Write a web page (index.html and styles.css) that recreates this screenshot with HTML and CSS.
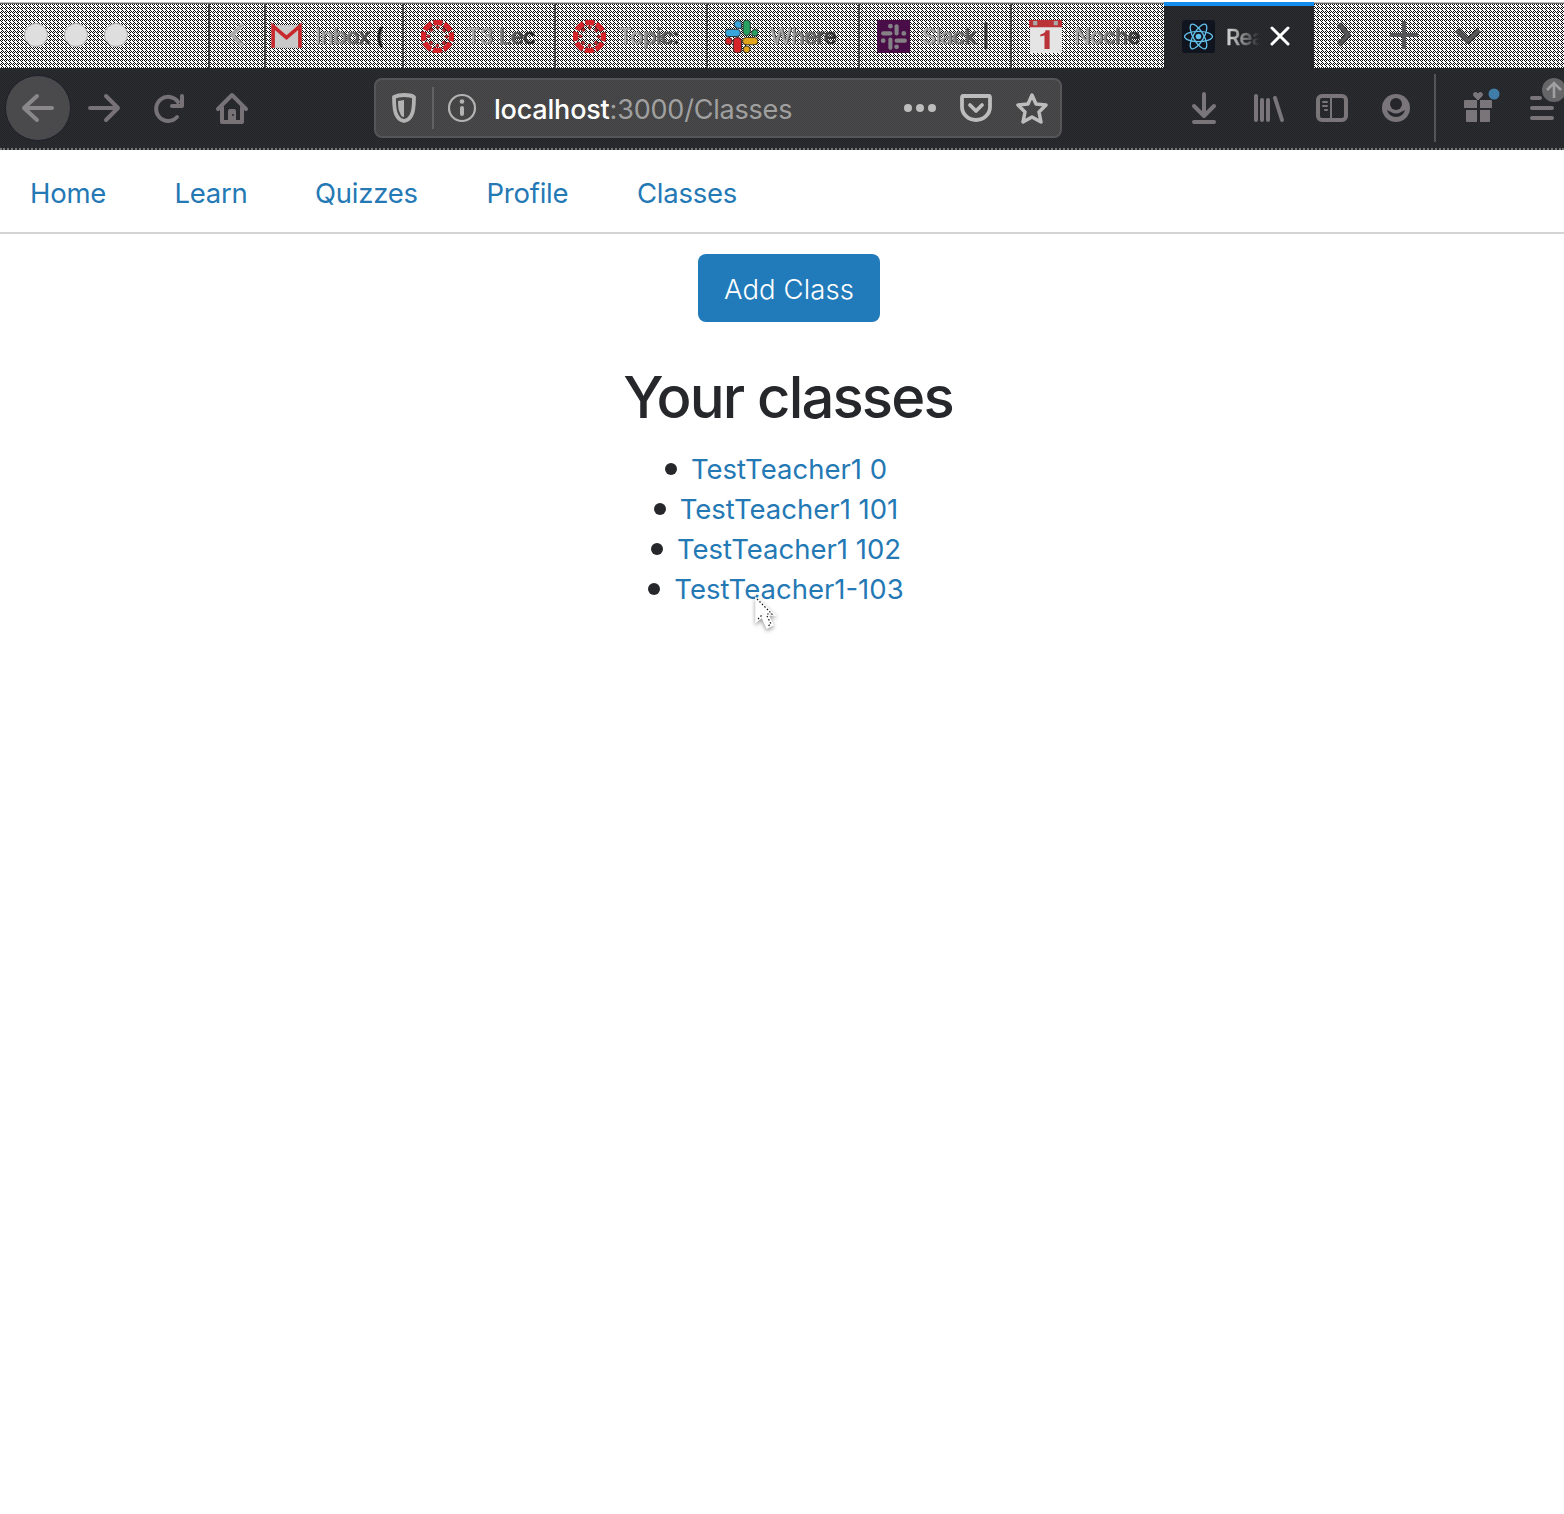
FILE: index.html
```html
<!DOCTYPE html>
<html lang="en">
<head>
<meta charset="utf-8">
<title>React App</title>
<link rel="stylesheet" href="styles.css">
</head>
<body>
<div class="tabstrip">
  <div class="window-controls"><i></i><i></i><i></i></div>
  <div class="tab-scroll"><svg width="54" height="64" viewBox="0 0 54 64"><path d="M33 20 22 31l11 11" fill="none" stroke="#aaa" stroke-width="4"/></svg></div>
  <div class="tab tab-first">
    <svg class="fav" viewBox="0 0 32 32"><path d="M2 5h28v22H2z" fill="#c9c9c9"/><path d="M3 27V6l13 11L29 6v21" fill="none" stroke="#c9282d" stroke-width="3.500"/></svg>
    <span class="label">Inbox (</span>
  </div>
  <div class="tab">
    <svg class="fav canvas" viewBox="0 0 32 32"><circle cx="16" cy="16" r="13.6" fill="none" stroke="#d6232a" stroke-width="5" stroke-dasharray="8.7 1.98" stroke-dashoffset="4.35"/><circle cx="16" cy="16" r="8.7" fill="none" stroke="#b52a2c" stroke-width="3" stroke-dasharray="3 3.83" stroke-dashoffset="1.5"/></svg>
    <span class="label">T3 Lec</span>
  </div>
  <div class="tab">
    <svg class="fav canvas" viewBox="0 0 32 32"><circle cx="16" cy="16" r="13.6" fill="none" stroke="#d6232a" stroke-width="5" stroke-dasharray="8.7 1.98" stroke-dashoffset="4.35"/><circle cx="16" cy="16" r="8.7" fill="none" stroke="#b52a2c" stroke-width="3" stroke-dasharray="3 3.83" stroke-dashoffset="1.5"/></svg>
    <span class="label">Topic:</span>
  </div>
  <div class="tab">
    <svg class="fav" viewBox="0 0 32 32"><g stroke="#222" stroke-width=".8"><rect x="0" y="9" width="15" height="7" rx="3.5" fill="#38a6dc"/><path d="M9 4a3.5 3.5 0 0 1 7 0v4h-3a4 4 0 0 1-4-4z" fill="#38a6dc"/><rect x="17.500" y="0" width="7" height="15" rx="3.500" fill="#27a062"/><circle cx="29" cy="12.500" r="3.200" fill="#27a062"/><rect x="17" y="17" width="15" height="7" rx="3.500" fill="#e0a51b"/><circle cx="21" cy="28.500" r="3.300" fill="#e0a51b"/><rect x="8" y="17" width="8" height="15" rx="3.500" fill="#d6232a"/><circle cx="3.500" cy="20.500" r="3.500" fill="#d6232a"/></g></svg>
    <span class="label">Where</span>
  </div>
  <div class="tab">
    <svg class="fav" viewBox="0 0 32 32"><path d="M0 0h32v32H0z" fill="#490d48"/><g fill="#858085"><rect x="4" y="11" width="11" height="4" rx="2"/><rect x="17" y="4" width="4" height="11" rx="2"/><rect x="17" y="18" width="12" height="4" rx="2"/><rect x="11" y="17" width="4" height="12" rx="2"/><circle cx="13" cy="6" r="2.300"/><circle cx="26" cy="13" r="2.300"/><circle cx="6" cy="20" r="2.300"/><circle cx="19" cy="26" r="2.300"/></g></svg>
    <span class="label">Slack |</span>
  </div>
  <div class="tab">
    <svg class="fav" viewBox="0 0 32 32"><path d="M1 3h31v29H1z" fill="#e5e5e5"/><path d="M0 0h32v7H0z" fill="#b93337"/><path d="M4 1h4v4H4zM24 1h4v4h-4z" fill="#aaa"/><path d="M11 14q5-1 5-4h4v18h-5V15l-4 1z" fill="#b93337"/></svg>
    <span class="label">Noche</span>
  </div>
  <div class="tab tab-active">
    <svg class="fav" viewBox="0 0 32 32"><rect width="32" height="32" rx="3" fill="#10141f"/><g fill="none" stroke="#61bfe8" stroke-width="1.300"><ellipse cx="16" cy="16" rx="13.500" ry="5"/><ellipse cx="16" cy="16" rx="13.500" ry="5" transform="rotate(60 16 16)"/><ellipse cx="16" cy="16" rx="13.500" ry="5" transform="rotate(120 16 16)"/></g><circle cx="16" cy="16" r="2.700" fill="#61bfe8"/></svg>
    <span class="label">Rea</span>
    <svg class="close" viewBox="0 0 20 20"><path d="m2 2 16 16M18 2 2 18" stroke="#fff" stroke-width="3" stroke-linecap="round"/></svg>
  </div>
  <svg class="tab-tools" width="248" height="64" viewBox="0 0 248 64"><g fill="none" stroke="#222" stroke-width="5.500" stroke-linejoin="round"><path d="m25 20 9 11-9 10"/><path d="m143 26 11 11 11-11"/></g><g fill="none" stroke="#555557" stroke-width="4"><path d="m25 20 9 11-9 10M90 17v28M76 31h28M143 26l11 11 11-11"/></g></svg>
</div>

<div class="toolbar">
  <svg class="nav-buttons" width="260" height="80" viewBox="0 0 260 80"><circle cx="38" cy="40" r="32.500" fill="#4a4a4c" stroke="#20202c"/><g fill="none" stroke="#767276" stroke-width="4" stroke-linecap="round" stroke-linejoin="round"><path d="M52 40H24M37 28 24 40l13 12" stroke="#8b888b"/><path d="M90 40h28M106 28l12 12-12 12"/><path d="M178 34a12 12 0 1 0-1 15M182 28v10h-10"/><path d="m218 41 14-14 14 14M222 39v15h20V39"/></g><path d="M228 54V43q0-2 2-2h4q2 0 2 2v11z" fill="#767276"/><circle cx="233" cy="47" r="1" fill="#26272c"/></svg>
  <div class="address">
    <svg class="address-left" width="118" height="56" viewBox="0 0 118 56"><g fill="none" stroke="#b3b3b3"><path d="M28 15q7 0 10 2 0 15-3 19-2 4-7 5-5-1-7-5-3-4-3-19 4-2 10-2z" stroke-width="3.800" stroke-linejoin="round"/><circle cx="86" cy="28" r="13" stroke-width="2.200"/></g><path d="M28 20v17q-3 0-4-4-2-3-2-12z" fill="#b3b3b3"/><path d="M57 7v42" stroke="#626264" stroke-width="2"/><path d="M86 28v6" stroke="#b3b3b3" stroke-width="4" stroke-linecap="round"/><circle cx="86" cy="21.500" r="2.300" fill="#b3b3b3"/></svg>
    <span class="url"><b>localhost</b>:3000/Classes</span>
    <svg class="address-right" width="160" height="56" viewBox="0 0 160 56"><g fill="#bdbdbd"><circle cx="8" cy="28" r="4"/><circle cx="20" cy="28" r="4"/><circle cx="32" cy="28" r="4"/></g><g fill="none" stroke="#bdbdbd" stroke-width="3.800" stroke-linejoin="round" stroke-linecap="round"><path d="M63 16h26q1 0 1 2v9a14 13 0 0 1-28 0v-9q0-2 1-2zM70 25l6 6 6-6"/><path d="m132 15 4 9 10 1-7 7 2 10-9-5-9 5 2-10-7-7 10-1z" stroke-width="3.500"/></g></svg>
  </div>
  <svg class="tools" width="384" height="80" viewBox="0 0 384 80"><g fill="none" stroke="#797579" stroke-width="4" stroke-linecap="round" stroke-linejoin="round"><path d="M24 26v22M14 38l10 10 10-10M14 54h20"/><path d="M76 28v24M82 32v20M88 32v20M95 30l7 22"/><rect x="138" y="28" width="28" height="24" rx="4"/><path d="M151 29v22" stroke-width="2"/><path d="M143 34h4M143 38h4M145 42h2" stroke-width="2"/></g><circle cx="216" cy="40" r="14" fill="#797579"/><circle cx="216" cy="36" r="6" fill="#25262b"/><path d="M207 42q2 1 4 2 5 3 10 0 2-1 4-2-2 7-9 7t-9-7z" fill="#25262b"/><path d="M210 41q6 7 12 0l1 1q-7 6-14 0z" fill="#797579"/><path d="M255 6v68" stroke="#555558" stroke-width="2"/><g fill="#797579"><path d="M285 32h12v8h-13v-7q0-1 1-1zM300 32h11q1 0 1 1v7h-12zM286 42h11v12h-10q-1 0-1-1zM300 42h10v11q0 1-1 1h-9z"/><path d="m298 32-4-4c-2-3 2-5 4-2 2-3 6-1 4 2z" stroke="#797579"/></g><circle cx="314" cy="26" r="5.500" fill="#407da8"/><path d="M352 30h8M352 40h20M352 50h20" stroke="#797579" stroke-width="4" stroke-linecap="round"/><circle cx="374" cy="22" r="12" fill="#666669"/><path d="M374 30V16M367 22l7-7 7 7" fill="none" stroke="#a0a0a0" stroke-width="2.600"/></svg>
</div>

<nav class="site-nav"><a class="n1">Home</a><a class="n2">Learn</a><a class="n3">Quizzes</a><a class="n4">Profile</a><a class="n5">Classes</a></nav>
<main class="content">
  <button class="add">Add Class</button>
  <h1>Your classes</h1>
  <ul>
    <li><a>TestTeacher1 0</a></li>
    <li><a>TestTeacher1 101</a></li>
    <li><a>TestTeacher1 102</a></li>
    <li><a>TestTeacher1-103</a></li>
  </ul>
</main>
<svg class="pointer" width="26" height="40" viewBox="0 0 26 40"><path d="M3 3v24l6-5 5 11 6-3-5-10h7z" fill="#fff" stroke="#fff" stroke-width="1.500"/><path d="m4 4 15 15h-6M5 24l5-5M14 21l4 8-3 2" fill="none" stroke="#111" stroke-width="1.200" stroke-dasharray="1.500 2"/></svg>
</body>
</html>
```
FILE: styles.css
```css
* { box-sizing: border-box; }
body { margin: 0; width: 1564px; height: 1514px; overflow: hidden; background: #fff; font-family: Inter, "Liberation Sans", sans-serif; }
svg { display: block; flex: none; }

.tabstrip { display: flex; height: 68px; padding-top: 4px; background: linear-gradient(#fff 0 2px, #bbb 2px 3px, #666 3px 4px, transparent 4px) 0 0 / 100% 100% no-repeat, conic-gradient(#fff 25%, transparent 0) 1px 1px / 4px 4px, repeating-conic-gradient(#fff 0 25%, #0c0c0c 0 50%) 0 0 / 2px 2px; }
.window-controls { display: flex; align-items: center; gap: 16px; width: 208px; padding: 0 0 3px 24px; }
.window-controls i { width: 24px; height: 24px; border-radius: 50%; background: #dedede; border: 1px solid #aaa; }
.tab-scroll { width: 56px; border-left: 2px solid #3d3d3d; }
.tab { display: flex; flex: none; align-items: center; width: 152px; padding: 0 0 0 17px; border-left: 2px solid #444; }
.tab-first { width: 138px; padding-left: 4px; }
.fav { width: 33px; height: 33px; margin-top: 1px; }
.canvas { filter: drop-shadow(0 0 .7px #000); }
.label { flex: none; width: 72px; margin-left: 12px; white-space: nowrap; font-size: 22px; line-height: 30px; letter-spacing: -.5px; color: transparent; background: linear-gradient(90deg, #aaa 25%, #555 70%, #111); background-clip: text; -webkit-text-stroke: .4px transparent; filter: drop-shadow(1px 0 0 #444); }
.tab-first .label { width: 68px; }
.tab-active { width: 150px; margin-top: -2px; padding: 0 0 0 18px; border-left: 0; border-top: 4px solid #148cec; background: repeating-conic-gradient(#2b2c30 0 25%, #232428 0 50%) 0 0 / 2px 2px; margin-left: 2px; }
.tab-active .fav { margin-top: -2px; }
.tab-active .label { width: 34px; margin: 0 0 0 11px; font-weight: 500; filter: none; background: linear-gradient(90deg, #ccc 10%, #777 60%, #26272c); background-clip: text; }
.close { width: 20px; height: 20px; margin: -2px 0 0 10px; }

.toolbar { display: flex; height: 82px; border-bottom: 2px dotted #777; background: repeating-conic-gradient(#2c2d30 0 25%, #232427 0 50%) 0 0 / 2px 2px; }
.nav-buttons { margin-right: 114px; }
.address { display: flex; width: 688px; height: 60px; margin-top: 10px; border: 2px solid #565658; border-radius: 8px; background: repeating-conic-gradient(#4b4b4c 0 25%, #404042 0 50%) 0 0 / 2px 2px; }
.url { width: 406px; line-height: 60px; font-size: 27px; letter-spacing: -.2px; white-space: nowrap; color: #a0a0a0; }
.url b { font-weight: 500; color: #fff; }
.tools { margin-left: 118px; }

.site-nav { display: flex; height: 84px; padding-left: 30px; border-bottom: 2px solid #d5d5d5; font-size: 27.5px; line-height: 86px; color: #2479b5; }
.site-nav a { white-space: nowrap; letter-spacing: -.25px; }
.n1 { width: 144.500px; }
.n2 { width: 140.500px; }
.n3 { width: 171.500px; }
.n4 { width: 150.500px; }
.content { width: 1578px; padding-top: 20px; text-align: center; color: #26272b; }
.add { display: block; width: 182px; height: 68px; margin: 0 auto; padding: 1px 0 0; border: 0; border-radius: 8px; background: #217bba; color: #fff; font: 300 27.5px Inter, sans-serif; letter-spacing: .1px; }
h1 { margin: 39px 0 16px; font-size: 58px; line-height: 72px; font-weight: 500; letter-spacing: -1.850px; text-indent: -2px; }
ul { margin: 0; padding: 0; list-style: none; font-size: 27.500px; line-height: 40px; }
li { display: flex; justify-content: center; align-items: center; gap: 14px; padding-right: 26px; }
li::before { content: ""; width: 12px; height: 12px; border-radius: 50%; background: #26272b; }
li a { color: #2479b5; }
.pointer { position: absolute; left: 753px; top: 595px; filter: drop-shadow(0 2px 2px #0006); }
```
